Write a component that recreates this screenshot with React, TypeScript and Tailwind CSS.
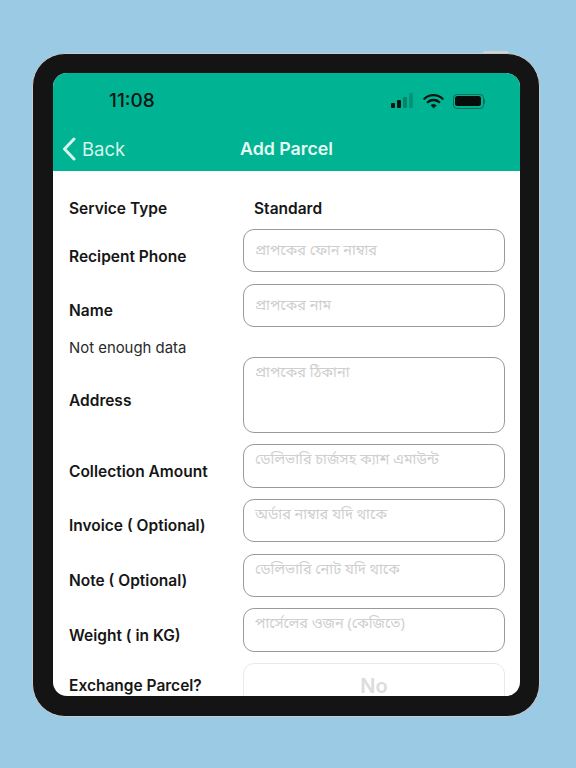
import React from 'react'

const font = "font-['Inter','Liberation_Sans','Noto_Sans',sans-serif]"
const bangla = "font-['Noto_Sans_Bengali','Lohit_Bengali','Noto_Sans','Liberation_Sans',sans-serif]"

const fields = [
  { label: 'Recipent Phone', hint: 'প্রাপকের ফোন নাম্বার', low: true },
  { label: 'Name', hint: 'প্রাপকের নাম', low: true, error: 'Not enough data' },
  { label: 'Address', hint: 'প্রাপকের ঠিকানা', tall: true },
  { label: 'Collection Amount', hint: 'ডেলিভারি চার্জসহ ক্যাশ এমাউন্ট' },
  { label: 'Invoice ( Optional)', hint: 'অর্ডার নাম্বার যদি থাকে' },
  { label: 'Note ( Optional)', hint: 'ডেলিভারি নোট যদি থাকে' },
  { label: 'Weight ( in KG)', hint: 'পার্সেলের ওজন (কেজিতে)' },
]

const Field = ({ label, hint, tall, low, error }: { label: string, hint: string, tall?: boolean, low?: boolean, error?: string }) => (
  <div>
    <div className="flex items-center">
      <p className="w-[174px] shrink-0 pt-[11px] text-[15.5px] font-semibold text-[#161616]">{label}</p>
      <div className={`w-[262px] rounded-[11px] border border-[#9a9a9a] px-[11px] ${low ? 'pt-[12px]' : 'pt-[6px]'} ${tall ? 'h-[75.7px]' : 'h-[43.4px]'}`}>
        <p className={`${bangla} text-[14.5px] leading-[20px] text-[#cfcfcf]`}>{hint}</p>
      </div>
    </div>
    {error && <p className="-mb-[12.35px] mt-[12px] h-[19px] text-[14.9px] leading-[19px] text-[#2a2a2a]">{error}</p>}
  </div>
)

const StatusIcons = () => (
  <div className="flex items-center gap-[9px]">
    <svg width="23" height="16" viewBox="0 0 23 16">
      <rect x="0" y="10" width="4" height="5" rx="1" fill="#0c1512" />
      <rect x="6" y="7" width="4" height="8" rx="1" fill="#0c1512" />
      <rect x="12" y="4" width="4" height="11" rx="1" fill="#0c1512" opacity="0.3" />
      <rect x="18" y="0" width="4" height="15" rx="1" fill="#0c1512" opacity="0.2" />
    </svg>
    <svg width="21" height="16" viewBox="0 0 22 16" fill="none" stroke="#0c1512" strokeWidth="2.4" strokeLinecap="round">
      <path d="M1.5 5.6C6.8 .6 15.2 .6 20.5 5.6" />
      <path d="M5 9.2C8.4 6.2 13.6 6.2 17 9.2" />
      <path d="M11 15.2L8.4 12.4C9.9 11.3 12.1 11.3 13.6 12.4Z" fill="#0c1512" strokeWidth="0.8" strokeLinejoin="round" />
    </svg>
    <div className="flex items-center">
      <div className="flex h-[15px] w-[31px] items-center rounded-[4px] border border-[#0e6e59] p-[1.5px]">
        <div className="h-full w-full rounded-[2.5px] bg-[#070d0b]" />
      </div>
      <div className="h-[5px] w-[1.5px] rounded-r-full bg-[#0e6e59]" />
    </div>
  </div>
)

const App = () => (
  <div className={`${font} h-[768px] w-[576px] overflow-hidden bg-[#9bcae4] pl-[32px] pt-[53px]`}>
    <div className="relative h-[664px] w-[508px] rounded-[33px] border border-[#c8ccce] bg-[#141414] py-[19px] pl-[20px] pr-[19px]">
      <div className="absolute -top-[3px] right-[30px] h-[2px] w-[26px] rounded-t-sm bg-[#cfd3d6]" />
      <div className="flex h-[623px] flex-col overflow-hidden rounded-[14px] bg-white">
        <header className="h-[98px] shrink-0 bg-[#00b493]">
          <div className="flex items-center justify-between pl-[56px] pr-[35px] pt-[16px]">
            <span className="text-[19px] font-medium leading-[24px] text-[#0c1512]">11:08</span>
            <StatusIcons />
          </div>
          <div className="relative mt-[24px] flex items-center justify-center">
            <div className="absolute left-[9px] top-0 flex items-center gap-[6px] text-[#d5f3ea]">
              <svg width="14" height="24" viewBox="0 0 14 24" fill="none" stroke="currentColor" strokeWidth="3" strokeLinecap="round" strokeLinejoin="round">
                <path d="M12 2L2.5 12L12 22" />
              </svg>
              <span className="text-[18.5px] leading-[24px]">Back</span>
            </div>
            <span className="text-[17.8px] font-semibold leading-[24px] text-[#e6f8f2]">Add Parcel</span>
          </div>
        </header>
        <main className="flex flex-col gap-[10px] pl-[16px] pt-[28px]">
          <div className="flex h-[20px] items-center text-[15.5px] font-semibold text-[#161616]">
            <p className="w-[185px]">Service Type</p>
            <p>Standard</p>
          </div>
          <div className="flex flex-col gap-[11.35px]">
            {fields.map((field) => (
              <Field key={field.label} {...field} />
            ))}
            <div className="flex items-center">
              <p className="w-[174px] shrink-0 pt-[2px] text-[15.5px] font-semibold text-[#161616]">Exchange Parcel?</p>
              <div className="flex h-[44px] w-[262px] items-center justify-center rounded-[11px] border border-[#e9e9e9] pt-[2px] text-[20px] font-semibold text-[#dcdcdc]">
                No
              </div>
            </div>
          </div>
        </main>
      </div>
    </div>
  </div>
)

export default App
